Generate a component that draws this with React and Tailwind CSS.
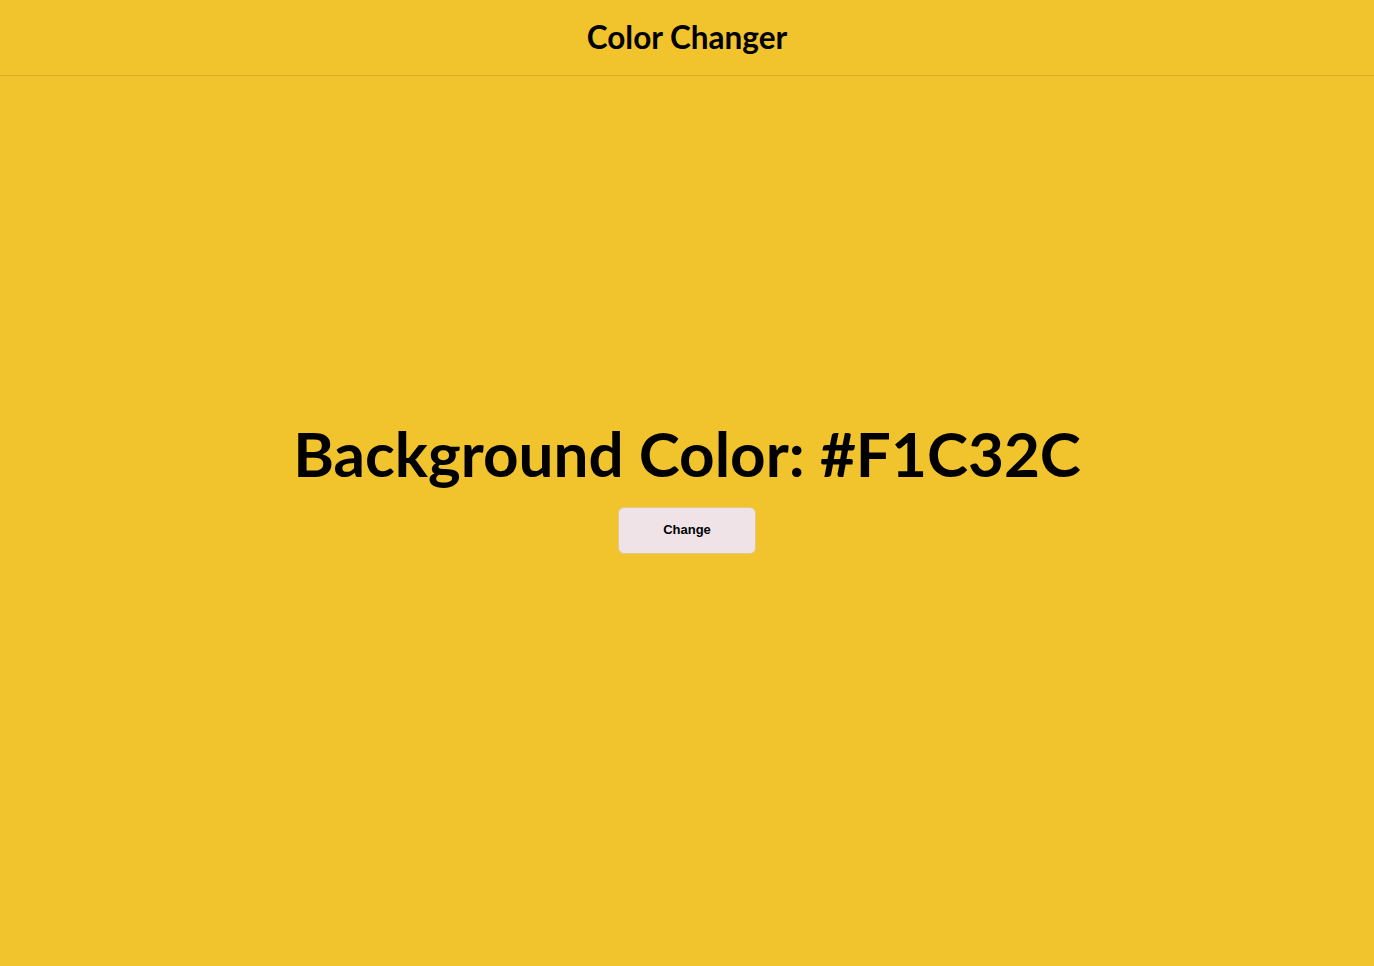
import React, { useState } from "react";

const colors = ["#F1C32C", "#2CB1F1", "#F1602C", "#7BD389", "#B57BF1"];

const App = () => {
  const [index, setIndex] = useState(0);
  const color = colors[index];

  const handleChange = () => {
    setIndex((prev) => (prev + 1) % colors.length);
  };

  return (
    <div
      className="h-screen flex flex-col font-['Lato',sans-serif] text-black"
      style={{ backgroundColor: color }}
    >
      {/* Header */}
      <header className="h-[76px] flex items-center justify-center border-b border-[#d9ad24]">
        <h1 className="text-[31.5px] font-bold">Color Changer</h1>
      </header>

      {/* Main */}
      <main className="flex-1 flex flex-col items-center justify-center pb-[72px]">
        <h2 className="text-[62px] font-bold leading-[1.2]">
          Background Color: {color}
        </h2>
        <button
          onClick={handleChange}
          className="mt-[16px] w-[138px] h-[47px] rounded-md bg-[#efe3e7] border border-[#e0c98a] font-['Liberation_Sans',Arial,sans-serif] text-[13px] font-bold"
        >
          Change
        </button>
      </main>
    </div>
  );
};

export default App;
